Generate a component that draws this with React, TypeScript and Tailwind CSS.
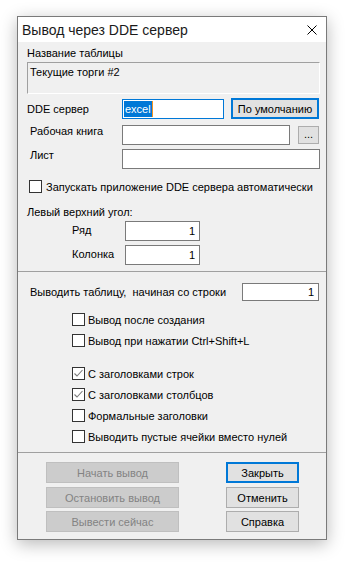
import React from 'react';

function Check({ checked }: { checked?: boolean }) {
  return (
    <span className="w-[13px] h-[13px] border border-[#333333] bg-white flex items-center justify-center shrink-0">
      {checked && (
        <svg width="11" height="11" viewBox="0 0 11 11">
          <path d="M1.5 5.5 L4 8 L9.5 2" stroke="#7a7a7a" strokeWidth="1.1" fill="none" />
        </svg>
      )}
    </span>
  );
}

function CheckRow({ label, checked, className = '' }: { label: string; checked?: boolean; className?: string }) {
  return (
    <div className={`flex items-center h-[13px] gap-[3px] ${className}`}>
      <Check checked={checked} />
      <span className="leading-[14px] whitespace-nowrap">{label}</span>
    </div>
  );
}

function Field({ value, className = '' }: { value?: string; className?: string }) {
  return (
    <div className={`border border-[#7a7a7a] bg-white flex items-center justify-end pr-[4px] ${className}`}>
      {value}
    </div>
  );
}

function Btn({
  label,
  variant = 'normal',
  className = '',
}: {
  label: string;
  variant?: 'normal' | 'default' | 'disabled';
  className?: string;
}) {
  const look =
    variant === 'default'
      ? 'border-2 border-[#0078d7] bg-[#e1e1e1] text-black'
      : variant === 'disabled'
        ? 'border border-[#bfbfbf] bg-[#cccccc] text-[#838383]'
        : 'border border-[#adadad] bg-[#e1e1e1] text-black';
  return (
    <div className={`flex items-center justify-center h-[21px] leading-[14px] ${look} ${className}`}>{label}</div>
  );
}

export default function App() {
  return (
    <div className="w-[348px] h-[562px] bg-white pt-[16px] pl-[17px] font-['Liberation_Sans',Arial,sans-serif] text-[11px] text-black">
      <div className="w-[310px] h-[524px] border border-[#7a7a7a] bg-[#f0f0f0] flex flex-col shadow-[0_4px_16px_rgba(0,0,0,0.28)]">
        {/* title bar */}
        <div className="h-[25px] bg-white flex items-center justify-between pl-[4px] pr-[9px] shrink-0">
          <span className="text-[14px] leading-[16px] text-[#1a1a1a]">Вывод через DDE сервер</span>
          <svg width="10" height="10" viewBox="0 0 10 10">
            <path d="M0.5 0.5 L9.5 9.5 M9.5 0.5 L0.5 9.5" stroke="#000" strokeWidth="1" />
          </svg>
        </div>

        <div className="ml-[9px] mt-[4px] leading-[14px]">Название таблицы</div>
        <div className="ml-[9px] mt-[2px] w-[293px] h-[32px] border-t border-l border-[#a0a0a0] border-r-white border-b-white border-r border-b pl-[2px] pt-[2px] leading-[14px]">
          Текущие торги #2
        </div>

        {/* DDE server */}
        <div className="flex items-start h-[21px] mt-[4px]">
          <span className="ml-[9px] w-[95px] mt-[4px] leading-[14px]">DDE сервер</span>
          <div className="mt-[1px] w-[102px] h-[20px] border border-[#0078d7] bg-white flex items-center pl-[1px]">
            <span className="bg-[#0078d7] text-white h-[16px] leading-[16px] pl-[1px] pr-[1px]">excel</span>
            <span className="w-px h-[16px] bg-[#f7931e]" />
          </div>
          <Btn label="По умолчанию" variant="default" className="ml-[7px] w-[88px]" />
        </div>

        {/* workbook */}
        <div className="flex items-start h-[20px] mt-[6px]">
          <span className="ml-[12px] w-[92px] -mt-px leading-[14px]">Рабочая книга</span>
          <Field className="w-[168px] h-[20px]" />
          <div className="ml-[8px] mt-[1px] w-[21px] h-[18px] border border-[#adadad] bg-[#e1e1e1] flex items-center justify-center leading-[10px] pb-[2px]">
            ...
          </div>
        </div>

        {/* sheet */}
        <div className="flex items-start h-[20px] mt-[4px]">
          <span className="ml-[12px] w-[92px] -mt-px leading-[14px]">Лист</span>
          <Field className="w-[198px] h-[20px]" />
        </div>

        <CheckRow label="Запускать приложение DDE сервера автоматически" className="ml-[11px] mt-[11px] gap-[4px]" />

        <div className="ml-[9px] mt-[12px] leading-[14px]">Левый верхний угол:</div>

        <div className="flex items-start h-[20px] mt-[2px]">
          <span className="ml-[54px] w-[53px] mt-[2px] leading-[14px]">Ряд</span>
          <Field value="1" className="w-[75px] h-[20px]" />
        </div>
        <div className="flex items-start h-[20px] mt-[4px]">
          <span className="ml-[54px] w-[53px] mt-[2px] leading-[14px]">Колонка</span>
          <Field value="1" className="w-[75px] h-[20px]" />
        </div>

        <div className="mt-[6px] h-px bg-[#a0a0a0]" />

        <div className="flex items-start h-[18px] mt-[11px]">
          <span className="ml-[12px] w-[212px] mt-[2px] leading-[14px] whitespace-pre">Выводить таблицу,  начиная со строки</span>
          <Field value="1" className="w-[77px] h-[18px]" />
        </div>

        <div className="ml-[54px] mt-[12px] flex flex-col">
          <CheckRow label="Вывод после создания" />
          <CheckRow label="Вывод при нажатии Ctrl+Shift+L" className="mt-[8px]" />
          <CheckRow label="С заголовками строк" checked className="mt-[20px]" />
          <CheckRow label="С заголовками столбцов" checked className="mt-[8px]" />
          <CheckRow label="Формальные заголовки" className="mt-[8px]" />
          <CheckRow label="Выводить пустые ячейки вместо нулей" className="mt-[8px]" />
        </div>

        <div className="mt-[9px] h-px bg-[#a0a0a0]" />

        <div className="mt-[9px] flex">
          <div className="ml-[28px] w-[133px] flex flex-col">
            <Btn label="Начать вывод" variant="disabled" />
            <Btn label="Остановить вывод" variant="disabled" className="mt-[4px]" />
            <Btn label="Вывести сейчас" variant="disabled" className="mt-[3px]" />
          </div>
          <div className="ml-[47px] w-[73px] flex flex-col">
            <Btn label="Закрыть" variant="default" />
            <Btn label="Отменить" className="mt-[4px]" />
            <Btn label="Справка" className="mt-[3px]" />
          </div>
        </div>
      </div>
    </div>
  );
}
